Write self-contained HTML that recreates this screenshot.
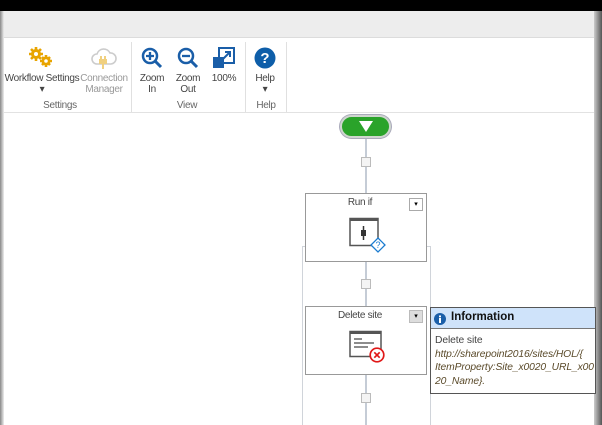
<!DOCTYPE html>
<html><head><meta charset="utf-8"><style>
*{margin:0;padding:0;box-sizing:border-box}
body{width:602px;height:425px;overflow:hidden;background:#fff;font-family:"Segoe UI","Liberation Sans",sans-serif;position:relative;color:#444}
.a{position:absolute}
.lbl{position:absolute;font-size:10px;color:#444;text-align:center;line-height:10.5px;letter-spacing:-0.3px}
.sq{position:absolute;width:10px;height:10px;border:1px solid #bbb;background:#f4f4f4;left:361px}
</style></head><body>
<div class="a" style="left:0;top:0;width:602px;height:11px;background:#000"></div>
<div class="a" style="left:0;top:11px;width:602px;height:27px;background:#ededed;border-bottom:1px solid #dcdcdc"></div>
<div class="a" style="left:0;top:112px;width:602px;height:1px;background:#e2e2e2"></div>
<div class="a" style="left:0;top:11px;width:4px;height:414px;background:linear-gradient(90deg,#888,#eee)"></div>
<div class="a" style="left:594px;top:11px;width:8px;height:414px;background:linear-gradient(90deg,#ccc,#555)"></div>
<div class="a" style="left:131px;top:42px;width:1px;height:70px;background:#e0e0e0"></div>
<div class="a" style="left:245px;top:42px;width:1px;height:70px;background:#e0e0e0"></div>
<div class="a" style="left:286px;top:42px;width:1px;height:70px;background:#e0e0e0"></div>
<svg class="a" style="left:27px;top:46px" width="28" height="22" viewBox="0 0 28 22">
<g fill="#e8a400"><circle cx="9" cy="8" r="5"/><circle cx="19" cy="15" r="4.5"/>
<g stroke="#e8a400" stroke-width="2.6"><path d="M9 1v14M2 8h14M4 3l10 10M14 3L4 13"/><path d="M19 9v12M13 15h12M15 11l8 8M23 11l-8 8"/></g></g>
<circle cx="9" cy="8" r="2" fill="#fff"/><circle cx="19" cy="15" r="1.8" fill="#fff"/></svg>
<div class="lbl" style="left:4px;top:74px;width:76px">Workflow Settings<br>▾</div>
<svg class="a" style="left:90px;top:46px" width="28" height="24" viewBox="0 0 28 24">
<path d="M7 18a5 5 0 0 1 0-10 7 7 0 0 1 13-1 5 5 0 0 1 1 11z" fill="none" stroke="#ccc" stroke-width="1.6"/>
<path d="M11 10v4M15 10v4M10 14h6v3h-6zM13 17v6" stroke="#f0d080" stroke-width="2" fill="#f0d080"/></svg>
<div class="lbl" style="left:79px;top:74px;width:50px;color:#999">Connection<br>Manager</div>
<svg class="a" style="left:141px;top:47px" width="22" height="22" viewBox="0 0 22 22"><circle cx="9" cy="9" r="7" fill="none" stroke="#1a5ea8" stroke-width="2.5"/><path d="M14 14l6 6" stroke="#1a5ea8" stroke-width="3"/><path d="M5 9h8M9 5v8" stroke="#1a5ea8" stroke-width="2.3"/></svg>
<div class="lbl" style="left:136px;top:74px;width:32px">Zoom<br>In</div>
<svg class="a" style="left:177px;top:47px" width="22" height="22" viewBox="0 0 22 22"><circle cx="9" cy="9" r="7" fill="none" stroke="#1a5ea8" stroke-width="2.5"/><path d="M14 14l6 6" stroke="#1a5ea8" stroke-width="3"/><path d="M5 9h8" stroke="#1a5ea8" stroke-width="2.3"/></svg>
<div class="lbl" style="left:172px;top:74px;width:32px">Zoom<br>Out</div>
<svg class="a" style="left:212px;top:47px" width="24" height="22" viewBox="0 0 24 22"><rect x="7" y="1" width="15" height="15" fill="#fff" stroke="#1a5ea8" stroke-width="2"/><rect x="1" y="10" width="11" height="11" fill="#1a5ea8"/><path d="M11 12l7-7M13 5h5v5" stroke="#1a5ea8" stroke-width="2" fill="none"/></svg>
<div class="lbl" style="left:208px;top:74px;width:32px">100%</div>
<svg class="a" style="left:254px;top:47px" width="22" height="22" viewBox="0 0 22 22"><circle cx="11" cy="11" r="10.5" fill="#0e5ea9"/><text x="11" y="16" font-size="15" font-weight="bold" fill="#fff" text-anchor="middle" font-family="Liberation Sans">?</text></svg>
<div class="lbl" style="left:249px;top:74px;width:32px">Help<br>▾</div>
<div class="lbl" style="left:30px;top:101px;width:60px;color:#666">Settings</div>
<div class="lbl" style="left:165px;top:101px;width:44px;color:#666">View</div>
<div class="lbl" style="left:250px;top:101px;width:32px;color:#666">Help</div>
<div class="a" style="left:365px;top:130px;width:2px;height:295px;background:#c5ccd6"></div>
<div class="a" style="left:302px;top:246px;width:129px;height:179px;border:1px solid #d0d4da;border-bottom:none"></div>
<div class="a" style="left:340px;top:115px;width:51px;height:23px;border-radius:12px;background:#2aa32a;border:2px solid #cfd6cf;box-shadow:0 0 0 1px #aab"></div>
<svg class="a" style="left:358px;top:120px" width="16" height="13"><path d="M1 1h14l-7 11z" fill="#fff"/></svg>
<div class="sq" style="top:157px"></div>
<div class="sq" style="top:279px"></div>
<div class="sq" style="top:393px"></div>
<div class="a" style="left:305px;top:193px;width:122px;height:69px;background:#fff;border:1px solid #999"></div>
<div class="lbl" style="left:305px;top:198px;width:110px;font-size:10px">Run if</div>
<div class="a" style="left:409px;top:198px;width:14px;height:13px;border:1px solid #aaa;background:#fff;font-size:7px;text-align:center;line-height:11px;color:#000">▾</div>
<svg class="a" style="left:349px;top:217px" width="38" height="36" viewBox="0 0 38 36"><rect x="1" y="1.5" width="28" height="27" fill="#fff" stroke="#555" stroke-width="1.5"/><rect x="1" y="1" width="28" height="3" fill="#555"/><path d="M14.5 9v14" stroke="#333" stroke-width="1.5"/><rect x="12" y="13" width="5" height="6" fill="#333"/><path d="M29 21l7 7-7 7-7-7z" fill="#fff" stroke="#1a7bd0" stroke-width="1.3"/><text x="29" y="31" font-size="9" fill="#1a7bd0" text-anchor="middle" font-family="Liberation Sans">?</text></svg>
<div class="a" style="left:305px;top:306px;width:122px;height:69px;background:#fff;border:1px solid #999"></div>
<div class="lbl" style="left:305px;top:311px;width:110px;font-size:10px">Delete site</div>
<div class="a" style="left:409px;top:310px;width:14px;height:13px;border:1px solid #bbb;background:#ddd;font-size:7px;text-align:center;line-height:11px;color:#000">▾</div>
<svg class="a" style="left:349px;top:330px" width="38" height="34" viewBox="0 0 38 34"><rect x="1" y="1.5" width="31" height="25" fill="#fff" stroke="#555" stroke-width="1.5"/><rect x="1" y="1" width="31" height="3" fill="#555"/><path d="M5 9h8M5 13h20M5 17h14" stroke="#666" stroke-width="1.5"/><circle cx="28" cy="25" r="6.8" fill="#fff" stroke="#e01818" stroke-width="1.7"/><path d="M25.3 22.3l5.4 5.4M30.7 22.3l-5.4 5.4" stroke="#e01818" stroke-width="1.7"/></svg>
<div class="a" style="left:430px;top:307px;width:166px;height:87px;border:1px solid #555;background:#fff"></div>
<div class="a" style="left:431px;top:308px;width:164px;height:21px;background:#cfe3fa;border-bottom:1px solid #777"></div>
<svg class="a" style="left:434px;top:313px" width="12" height="12"><circle cx="6" cy="6" r="6" fill="#1a5ea8"/><rect x="5" y="5" width="2" height="5" fill="#fff"/><rect x="5" y="2.5" width="2" height="1.8" fill="#fff"/></svg>
<div class="a" style="left:451px;top:311px;font-size:11.5px;font-weight:bold;color:#111">Information</div>
<div class="a" style="left:435px;top:334px;width:160px;font-size:10.3px;line-height:13.5px;color:#444;letter-spacing:-0.1px">Delete site<br><i style="color:#5a4a2a">http://sharepoint2016/sites/HOL/{<br>ItemProperty:Site_x0020_URL_x00<br>20_Name}.</i></div>
</body></html>
